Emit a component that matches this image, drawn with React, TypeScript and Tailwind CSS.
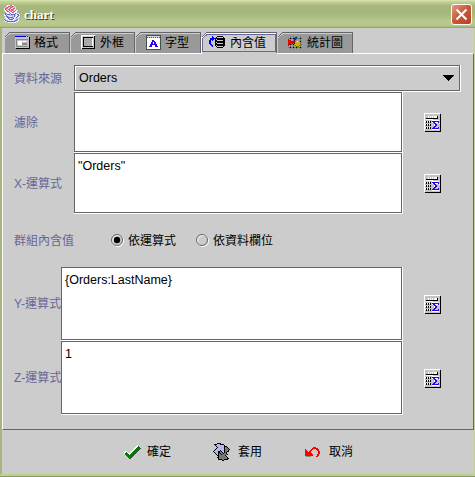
import type { ReactNode } from 'react';

const palette: Record<string, string> = {
  K: '#000000',
  W: '#ffffff',
  g: '#c4c4c4',
  d: '#777777',
  b: '#3200e6',
  R: '#f00000',
  r: '#f08088',
  B: '#0030c0',
  t: '#30a0a0',
  Y: '#c8b800',
  y: '#807000',
  l: '#b4b8f4',
  L: '#6068b8',
  w: '#eceeff',
  m: '#702020',
  p: '#e05868',
};

/* Draws an icon from rows of palette letters; a dot is transparent. */
function PixelIcon({ rows }: { rows: string[] }) {
  return (
    <svg width={rows[0].length} height={rows.length} shapeRendering="crispEdges">
      {rows.flatMap((row, y) =>
        [...row].map((c, x) => (c === '.' ? null : <rect key={`${x}-${y}`} x={x} y={y} width="1" height="1" fill={palette[c]} />)),
      )}
    </svg>
  );
}

const java = [
  '...wwwprww......',
  '..wwpprrppw.....',
  '.wpprwpprwrw....',
  'wpprwrpwwppw....',
  'wprwppwpprww....',
  'wwprwprrprwpww..',
  '.wwppwrpwrpww...',
  '..wwwpwwppwww...',
  'lLlwwwpwwwwLlww.',
  'wLlLLLlLLLLlwLLw',
  'wwLwwllllwLlwwLl',
  '.wLLlwwwllLwwLlw',
  '.wwLLLLLLlwwLlw.',
  'wlwwLlwllLwllw..',
  'LlwwwLLLLwwwlLw.',
  'wLLlwwwwwwlLLlw.',
  '.wwLLLLLLLLlww..',
  '....wwwwwwww....',
];

const calculator = [
  'WWWWWWWWWWWWWWWWg',
  'WgggggggggggggggK',
  'WgggggggggggggggK',
  'WgggWgWgWgWWWKggK',
  'WgggWgWgWgWWWKggK',
  'WgKKKKKKKKKKKKggK',
  'WgWWWWWWWgggggggK',
  'WgggggggWWWWWWWgK',
  'WWKWKWKgbbbbbbbgK',
  'WgKgKgKgWbbWWWbgK',
  'WgggggggggbbgggWK',
  'WWKWKWKgggWbbgggK',
  'WgKgKgKgggWbbgggK',
  'WgggggggggbbggggK',
  'WWKWKWKggbbgggbgK',
  'WgKgKgKgbbbbbbbgK',
  'WgggggggWWWWWWWgK',
  'WgggggggggggggggK',
  'gKKKKKKKKKKKKKKKK',
];

const chart = [
  '..d..d..d...d.',
  '..d..ddBBt..d.',
  'ddKddKBBBtddKd',
  'R.d..dBBt...d.',
  'RRR..dmd....d.',
  'RRRRRmmdYWY.Kd',
  'RRRRRmmYYYYYd.',
  'RRRRmdKYYYYYy.',
  'RRKddKYYYYYYyd',
  'R.d..d.yYYYyd.',
  '..d..d..yyy.d.',
  'ddKddKddKdddKd',
  '..d..d..d...d.',
];

const fontLetter = [
  'WWWWWWWWWWW',
  'WWWWbbWWWWW',
  'WWWWbbbWWWW',
  'WWWbbWbbWWW',
  'WWWbbWbbWWW',
  'WWbbbbbbbWW',
  'WWbbWWWbbWW',
  'WbbbWWWbbbW',
  'WWWWWWWWWWW',
];

/* Two interlocked arrows: pale one pointing up, grey one pointing down. */
const apply = [
  '....KKKK.........',
  '.KKKlllKKKK......',
  '..KllllllllK.....',
  '...KlllllllKKK...',
  '....KllllllKddK..',
  '...KlllllllKdddK.',
  '..KllllllllKddddK',
  '.KlllllKlllKdddK.',
  'KllllKKdKllKddKK.',
  '.KlllKKddKlKdK...',
  '..KllKdKddKddK...',
  '...KlKddKdddddK..',
  '....KKddddddK....',
  '.....KdddddddK...',
  '....KKddddddddK..',
  '.....KddddddddKK.',
  '.....KKKKddKKKK..',
  '.........KK......',
];

function FormatIcon() {
  return (
    <svg width="15" height="13" viewBox="0 0 15 13" shapeRendering="crispEdges">
      <path fill="#c4c4c4" d="M0 0h14v12H0z" />
      <path fill="#0000ee" d="M0 0h11v1H0zM12 0h1v1h-1z" />
      <path fill="#000" d="M14 1h1v12H1v-1h13z" />
      <path fill="#888" d="M1 3h12v1H1zM1 4h1v7H1zM1 10h12v1H1zM7 7h5v2H7z" />
      <path fill="#fff" d="M3 5h4v4H3zM8 5h3v1H8z" />
    </svg>
  );
}

function FrameIcon() {
  return (
    <svg width="14" height="14" viewBox="0 0 14 14" shapeRendering="crispEdges">
      <path fill="#c8c8c8" d="M0 0h14v14H0z" />
      <path fill="#fff" d="M0 0h14v1H1v13H0z" />
      <path fill="#000" d="M13 1h1v13H1v-1h12zM2 2h10v10H2z" />
      <path fill="#a8a8a8" d="M3 3h8v8H3z" />
      <path fill="#fff" d="M3 11h9V3h-1v8H3z" />
    </svg>
  );
}

function FontIcon() {
  return (
    <div className="h-[15px] w-[15px] border border-[#405450] bg-white">
      <div className="mb-px h-[2px] border-b border-dotted border-[#405450] bg-[#d0dada]" />
      <div className="pl-px">
        <PixelIcon rows={fontLetter} />
      </div>
    </div>
  );
}

function ValueIcon() {
  return (
    <svg width="16" height="12" viewBox="0 0 16 12" shapeRendering="crispEdges">
      <path fill="#0000f0" d="M3 0h1v1h1v1h1v1H5v1H4v1H3V4H2v4h1v1h1v2H3v-1H2V9H1V8H0V4h1V2h2z" />
      <path fill="#000" d="M8 0h6v1h1v1h1v8h-1v1h-1v1H8v-1H7v-1H6V2h1V1h1z" />
      <path fill="#c8c8c8" d="M8 1h6v1H8zM7 3h1v1h6v1H8V4H7zM7 6h1v1h6v1H8V7H7zM7 9h1v1h6v1H8v-1H7z" />
    </svg>
  );
}

function CheckIcon() {
  return (
    <svg width="17" height="15" viewBox="0 0 17 15" shapeRendering="crispEdges" fill="none">
      <path stroke="#fff" strokeWidth="3" d="M1 7L5 11L14.5 1.5" />
      <path stroke="#444" strokeWidth="3" d="M2.5 9L6 12.5L16 2.5" />
      <path stroke="#007c00" strokeWidth="3" d="M1.5 7.8L5.5 11.8L15.5 1.8" />
    </svg>
  );
}

function UndoIcon() {
  return (
    <svg width="15" height="11" viewBox="0 0 15 11" shapeRendering="crispEdges">
      <path fill="#888" d="M5 3h1V2h1V1h1v1H7v2H5zM13 4h1v5h-1v1h-2V9h1V8h1zM5 9h1v1H1V9z" />
      <path fill="#f00" d="M0 2h1v1h1v1h1v1h1V4h1V3h1V2h1V1h1V0h3v1h2v1h1v2h1v3h-1v2h-1v1h-2V9h1V7h1V4h-1V3h-1V2H8v1H7v1H6v2h1v1h1v2H0z" />
    </svg>
  );
}

function Tab({ label, icon, width, active }: { label: string; icon: ReactNode; width: string; active?: boolean }) {
  return (
    <div className={`relative h-[22px] shrink-0 ${width}`}>
      <svg className="absolute inset-0 h-full w-full" preserveAspectRatio="none" shapeRendering="crispEdges">
        {active ? (
          <>
            <path d="M0 22V6L6 0h70v22z" fill="#ccc" />
            <path d="M0 6L6 .5h70" fill="none" stroke="#666" />
            <path d="M.5 22V6L6 1.5h69" fill="none" stroke="#fff" />
            <path d="M1.5 19.5V6.5L6 2.5h68.5v17z" fill="none" stroke="#666699" />
            <path d="M75.5 1v20" stroke="#666" />
          </>
        ) : (
          <>
            <path d="M0 21V6L6 0h100v21z" fill="#999" />
            <path d="M0 6L6 .5h100" fill="none" stroke="#666" />
            <path d="M.5 21V6L6 1.5h100" fill="none" stroke="#ccc" />
          </>
        )}
      </svg>
      {!active && <div className="absolute right-0 top-0 h-[21px] w-px bg-[#666]" />}
      <div className={`relative flex h-5 items-center ${active ? 'pl-2' : 'pl-[11px]'}`}>
        <span className={`flex shrink-0 items-center ${active ? 'w-[21px]' : 'w-[19px]'}`}>{icon}</span>
        <span className="whitespace-nowrap pt-px leading-5">{label}</span>
      </div>
    </div>
  );
}

function FieldRow({ label, value, height, labelWidth }: { label: string; value: string; height: string; labelWidth: string }) {
  return (
    <div className={`flex items-center ${height}`}>
      <label className={`shrink-0 whitespace-nowrap text-[#666699] ${labelWidth}`}>{label}</label>
      <div className="h-full flex-1 border-r border-b border-white">
        <div className="h-full border border-[#666] bg-white pt-[5px] pl-[3px] text-[12.5px] leading-[15px] text-black">{value}</div>
      </div>
      <button className="ml-[21px] mr-[32px] shrink-0" aria-label={label}>
        <PixelIcon rows={calculator} />
      </button>
    </div>
  );
}

function Radio({ label, checked }: { label: string; checked?: boolean }) {
  return (
    <label className="flex items-center gap-[4px]">
      <svg width="13" height="13" viewBox="0 0 13 13">
        <circle cx="7" cy="7" r="5.5" fill="none" stroke="#fff" />
        <circle cx="6" cy="6" r="5.5" fill="none" stroke="#666" />
        {checked && <circle cx="6" cy="6" r="3.2" fill="#000" />}
      </svg>
      <span>{label}</span>
    </label>
  );
}

export default function App() {
  return (
    <div className="flex h-[477px] w-[475px] flex-col overflow-hidden bg-[#ccc] font-['Liberation_Sans','Noto_Sans_CJK_TC',sans-serif] text-[12px] leading-4 text-black">
      <header className="flex h-7 shrink-0 items-center bg-[linear-gradient(to_bottom,#dce5b1_0px,#c2cf93_2px,#a5b77c_6px,#a5b77c_13px,#bac990_22px,#b5c589_26px,#8b9f60_28px)] pl-1 pr-[3px]">
        <PixelIcon rows={java} />
        <h1 className="ml-1 flex-1 pt-px font-['Liberation_Serif',serif] text-[13px] font-bold leading-4 text-white [text-shadow:1px_1px_0_#354119]">chart</h1>
        <button aria-label="close" className="mt-px flex h-[21px] w-[21px] items-center justify-center rounded-[3px] border border-white bg-[linear-gradient(135deg,#e39a83,#cb5635_50%,#b54322)]">
          <svg width="13" height="13" viewBox="0 0 13 13"><path d="M1.500 1.500l10 10M11.500 1.500l-10 10" stroke="#fff" strokeWidth="2" /></svg>
        </button>
      </header>

      <div className="flex min-h-0 flex-1 flex-col border-l-2 border-r border-l-[#a6b67b] border-r-[#c5d190]">
        <nav className="flex h-[25px] shrink-0 pl-[2px] pt-1">
          <Tab label="格式" icon={<FormatIcon />} width="w-[66px]" />
          <Tab label="外框" icon={<FrameIcon />} width="w-[65px]" />
          <Tab label="字型" icon={<FontIcon />} width="w-[66px]" />
          <Tab label="內含值" icon={<ValueIcon />} width="w-[76px]" active />
          <Tab label="統計圖" icon={<PixelIcon rows={chart} />} width="w-[76px]" />
        </nav>

        <main className="flex h-[377px] shrink-0 flex-col border-b border-l border-r border-t border-b-[#666] border-l-white border-r-[#666] border-t-white pl-[11px] pt-[11px]">
          <div className="flex h-[27px] items-center">
            <label className="w-[60px] shrink-0 text-[#666699]">資料來源</label>
            <div className="h-[27px] w-[387px] border-r border-b border-white">
              <div className="flex h-[26px] items-center justify-between border border-[#666] pl-1 pr-[5px] text-[12.5px] shadow-[inset_1px_1px_0_#fff]">
                <span>Orders</span>
                <svg width="11" height="6" viewBox="0 0 11 6" shapeRendering="crispEdges"><path d="M0 0h11v1h-1v1H9v1H8v1H7v1H6v1H5V5H4V4H3V3H2V2H1V1H0z" /></svg>
              </div>
            </div>
          </div>
          <FieldRow label="濾除" value="" height="h-[61px]" labelWidth="w-[60px]" />
          <FieldRow label="X-運算式" value={'"Orders"'} height="h-[61px]" labelWidth="w-[60px]" />
          <div className="flex h-[53px] items-center">
            <span className="w-[97px] text-[#666699]">群組內含值</span>
            <div className="flex gap-5">
              <Radio label="依運算式" checked />
              <Radio label="依資料欄位" />
            </div>
          </div>
          <FieldRow label="Y-運算式" value="{Orders:LastName}" height="h-[74px]" labelWidth="w-[47px]" />
          <FieldRow label="Z-運算式" value="1" height="h-[74px]" labelWidth="w-[47px]" />
        </main>

        <footer className="flex h-11 shrink-0 items-center pl-[122px]">
          <button className="flex items-center gap-[6px]"><CheckIcon />確定</button>
          <button className="ml-[42px] flex items-center gap-[8px]"><PixelIcon rows={apply} />套用</button>
          <button className="ml-[43px] flex items-center gap-[9px]"><UndoIcon />取消</button>
        </footer>
        <div className="-ml-[2px] -mr-px h-[3px] border-t-2 border-b border-t-[#c1cd8b] border-b-[#8a9b62]" />
      </div>
    </div>
  );
}
